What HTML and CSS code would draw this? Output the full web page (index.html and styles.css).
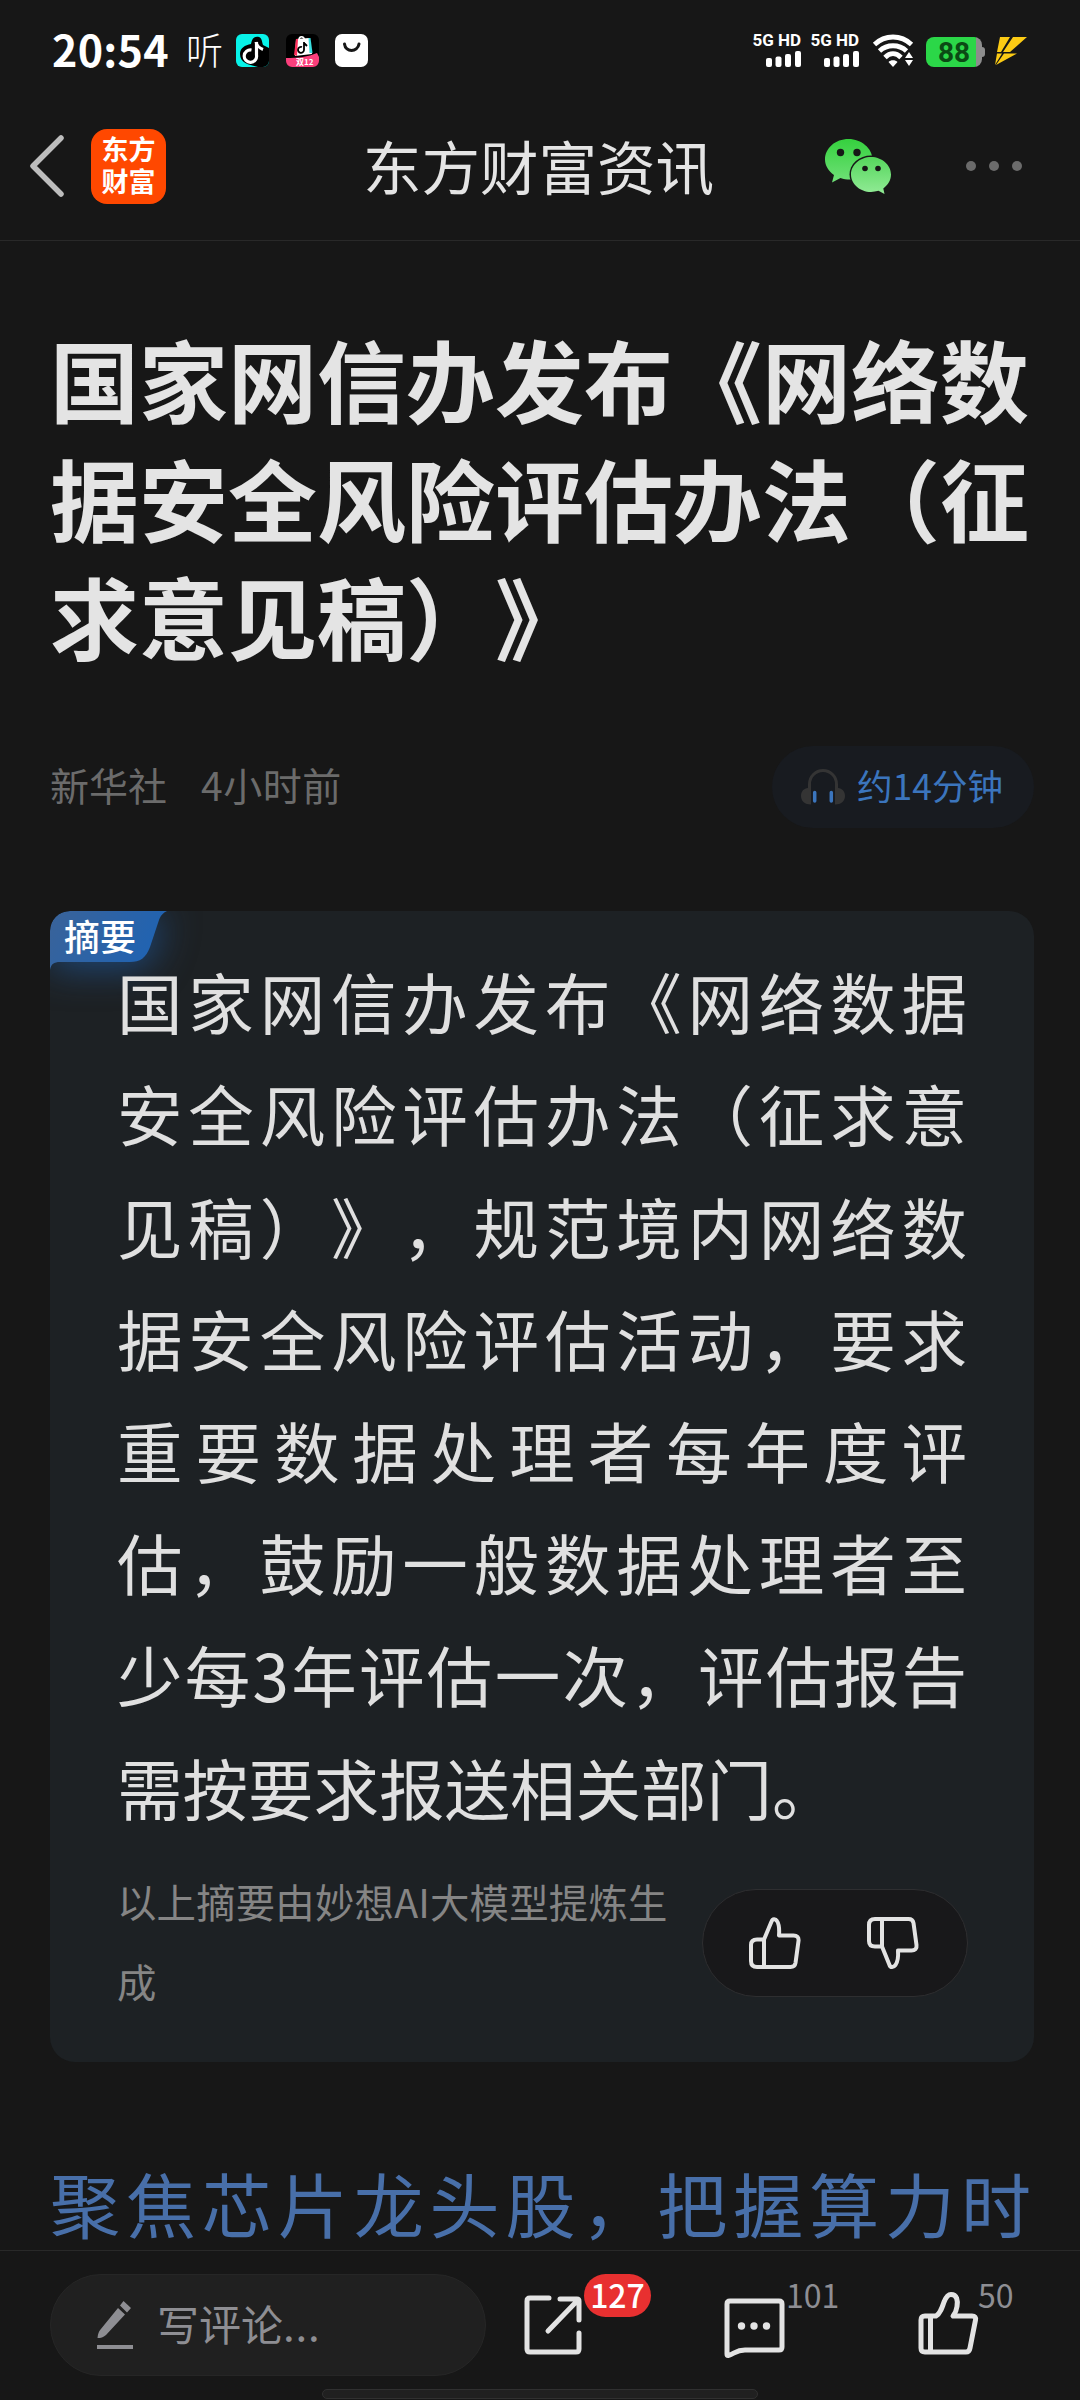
FILE: index.html
```html
<!DOCTYPE html>
<html lang="zh-CN">
<head>
  <meta charset="UTF-8">
  <meta name="viewport" content="width=device-width, initial-scale=1.0">
  <title>东方财富资讯</title>
  <link rel="stylesheet" href="styles.css">
</head>
<body>
  <div class="screen">
    <header class="status-bar">
      <span class="clock">20:54</span>
      <span class="listen">听</span>
      <svg class="app-icon" viewBox="0 0 33 33">
        <rect width="33" height="33" rx="6" fill="#08f3e9"/>
        <path d="M33 14V27a6 6 0 0 1-6 6H22C15 31 4 30 4 20c0-6 5-9 11-10 1-6 4-8 8-7 3 1 3 5 4 8z" fill="#000"/>
        <path d="M20.500 8V21a6.200 6.200 0 1 1-5-5" fill="none" stroke="#fff" stroke-width="3.200"/>
        <path d="M20 8c1 4 3 6 7 7.500" fill="none" stroke="#fff" stroke-width="3"/>
      </svg>
      <svg class="app-icon" viewBox="0 0 33 33">
        <rect width="33" height="33" rx="6" fill="#000"/>
        <path d="M10 5l13-1 3 16-17 2z" fill="#fff"/>
        <path d="M10 5l-2 16 3 1 1-17z" fill="#ff2e5b"/>
        <path d="M22.500 4h2l2 15h-3z" fill="#39dfe0"/>
        <path d="M13 6c0-4.500 5-4.500 5.500 0" fill="none" stroke="#fff" stroke-width="1.500"/>
        <path d="M18 8v8a3 3 0 1 1-2-3M18 9l3 3" fill="none" stroke="#000" stroke-width="1.800"/>
        <path d="M0 24c12 0 22-1 31-5l2 4v4a6 6 0 0 1-6 6H6a6 6 0 0 1-6-6z" fill="#fb3f7c"/>
        <text x="10" y="31" class="sale">双12</text>
      </svg>
      <svg class="app-icon" viewBox="0 0 33 33">
        <rect width="33" height="33" rx="7" fill="#fff"/>
        <path d="M9.500 10c1 8.500 13 8.500 14.500 0" fill="none" stroke="#161616" stroke-width="3" stroke-linecap="round"/>
      </svg>
      <div class="status-right">
        <div class="signal">
          <span>5G HD</span>
          <svg width="35" height="16" viewBox="0 0 35 16" fill="#fff"><rect y="7" width="6" height="9" rx="2"/><rect x="9.500" y="5.500" width="6" height="10.500" rx="2"/><rect x="19" y="3" width="6" height="13" rx="2"/><rect x="29" width="6" height="16" rx="2"/></svg>
        </div>
        <div class="signal">
          <span>5G HD</span>
          <svg width="35" height="16" viewBox="0 0 35 16" fill="#fff"><rect y="7" width="6" height="9" rx="2"/><rect x="9.500" y="5.500" width="6" height="10.500" rx="2"/><rect x="19" y="3" width="6" height="13" rx="2"/><rect x="29" width="6" height="16" rx="2"/></svg>
        </div>
        <svg class="wifi" viewBox="0 0 40 32">
          <g fill="none" stroke="#fff" stroke-width="4.800">
            <path d="M1.500 9.500C12-.5 28-.5 38.500 9.500"/>
            <path d="M6.500 16C14 9 26 9 33.500 16"/>
            <path d="M12 22.500C17 17.500 23 17.500 28 22.500"/>
          </g>
          <path d="M20 32l-4.500-5c2-2.500 7-2.500 9 0z" fill="#fff"/>
          <path d="M31 22l5-7 4 5v12h-9z" fill="#171717"/>
          <path d="M36 17l4 6h-8zM36 31l4-6h-8z" fill="#fff"/>
        </svg>
        <div class="battery"><span>88</span></div>
        <svg class="bolt" viewBox="0 0 32 28" fill="#fccb14">
          <path d="M5 0h10L6 15H2zM18 0h14L15 15H8zM2 16.500h5L0 28zM9 16.500h13L1 28z"/>
        </svg>
      </div>
    </header>

    <nav class="nav-bar">
      <svg class="back" viewBox="0 0 36 62"><path d="M32 3L4 31l28 28" fill="none" stroke="#bdbdbd" stroke-width="5.500" stroke-linecap="round" stroke-linejoin="round"/></svg>
      <div class="logo"><span>东方</span><span>财富</span></div>
      <h1 class="nav-title">东方财富资讯</h1>
      <svg class="wechat" viewBox="0 0 66 55">
        <defs>
          <linearGradient id="wx-back" x1="0" y1="0" x2="0" y2="1"><stop offset="0" stop-color="#35d13e"/><stop offset="1" stop-color="#70e078"/></linearGradient>
          <linearGradient id="wx-front" x1="0" y1="0" x2="0" y2="1"><stop offset="0" stop-color="#55d65c"/><stop offset="1" stop-color="#92eb96"/></linearGradient>
        </defs>
        <path d="M23.500 0C10.500 0 0 9 0 20.500c0 6 3.500 11.500 9 15.500l-2 7.500 8.500-4.500c3 1 6 1.500 9.500 1.500 12.500 0 22.500-9 22.500-20S36.500 0 23.500 0z" fill="url(#wx-back)"/>
        <ellipse cx="46" cy="35.500" rx="21.500" ry="19" fill="#171717"/>
        <path d="M46 18c-11 0-20 8-20 17.500S35 53 46 53c2.500 0 5-.5 7.500-1.200l6 3.200-1.200-5.500C63 46 66 41 66 35.500 66 26 57 18 46 18z" fill="url(#wx-front)"/>
        <g fill="#171717"><circle cx="15.500" cy="13.500" r="3.700"/><circle cx="32" cy="13.500" r="3.700"/><circle cx="40" cy="29.500" r="2.800"/><circle cx="53" cy="29.500" r="2.800"/></g>
      </svg>
      <div class="more"><i></i><i></i><i></i></div>
    </nav>

    <main class="article">
      <h2 class="headline">国家网信办发布《网络数据安全风险评估办法（征求意见稿）》</h2>

      <div class="meta">
        <span class="source">新华社</span>
        <span class="time">4小时前</span>
        <div class="listen-pill">
          <svg viewBox="0 0 44 36">
            <path d="M8.500 22V15a13.500 13.500 0 0 1 27 0v7" fill="none" stroke="#343434" stroke-width="3"/>
            <path d="M10 19v16.500C4 35.500 0 32 0 27s3-7.500 7-8zM34 19v16.500c6 0 10-3.500 10-8.500s-3-7.500-7-8z" fill="#343434"/>
            <path d="M13.700 23.500v8.500M30.300 23.500v8.500" stroke="#3b75bd" stroke-width="3.500" stroke-linecap="round"/>
          </svg>
          <span>约14分钟</span>
        </div>
      </div>

      <section class="summary">
        <div class="tag-glow">
          <svg viewBox="0 0 117 59">
            <defs><linearGradient id="tag-fill" x1="0" y1="0" x2="1" y2="0.300"><stop offset="0" stop-color="#3a6399"/><stop offset="1" stop-color="#2063b2"/></linearGradient></defs>
            <path d="M0 59V20A20 20 0 0 1 20 0H117c-4 2-6 4-8 9l-9 27c-4 11-10 15-20 15H10C4 51 1 53 0 59z" fill="url(#tag-fill)"/>
          </svg>
        </div>
        <span class="tag">摘要</span>
        <p class="summary-text">国家网信办发布《网络数据安全风险评估办法（征求意见稿）》，规范境内网络数据安全风险评估活动，要求重要数据处理者每年度评估，鼓励一般数据处理者至少每3年评估一次，评估报告需按要求报送相关部门。</p>
        <div class="summary-foot">
          <p class="note">以上摘要由妙想AI大模型提炼生成</p>
          <div class="vote">
            <svg viewBox="0 0 52 52"><path d="M15 22.500L22.500 4.500c1-3 4-3 5.500-.5 2 3 2.500 8 2 14.500h14.500c3.500 0 5.500 2 5 5.500l-3 22c-.5 3-2 4-5 4H8c-4 0-6-2-6-6V28c0-4 2-5.500 6-5.500zM15 22.500v27"/></svg>
            <svg viewBox="0 0 52 52"><path d="M15 29.500L22.500 48c1 3 4 2.500 6 0 2-3 3-8 2.500-14.500H44.500c3.500 0 5.500-2 5-5.500l-3-22c-.5-3-2-4-5-4H8c-4 0-6 2-6 6V24c0 4 2 5.500 6 5.500zM15 29.500v-27"/></svg>
          </div>
        </div>
      </section>

      <p class="promo">聚焦芯片龙头股，把握算力时</p>
    </main>

    <footer class="toolbar">
      <div class="comment-box">
        <svg viewBox="0 0 36 50" fill="#8e8e93"><path d="M21 8l7 6.500L9 35c-3 2.500-5 3-8.500 3 .5-4 1-6 3-8.500zM23 5.500L26.500 1 34 8l-4 4.500zM0 45h36v4H0z"/></svg>
        <span>写评论<span class="dots">...</span></span>
      </div>
      <div class="action share">
        <svg viewBox="0 0 60 60"><path d="M25 3H6C4 3 3 4 3 6v48c0 2 1 3 3 3h46c2 0 3-1 3-3V38M36 4h17c1.500 0 2 .5 2 2v19M53 6L24 36"/></svg>
        <span class="badge">127</span>
      </div>
      <div class="action comments">
        <svg viewBox="0 0 64 60"><path d="M6 3h49c2 0 3 1 3 3v43c0 2-1 3-3 3H21c-9 0-11 4-17 5.500-1 0-1-.5-1-1.500V6c0-2 1-3 3-3z"/><g fill="#e3e3e3" stroke="none"><circle cx="17.500" cy="28" r="3.700"/><circle cx="30" cy="28" r="3.700"/><circle cx="42.500" cy="28" r="3.700"/></g></svg>
        <span class="count">101</span>
      </div>
      <div class="action likes">
        <svg viewBox="0 0 64 63"><path d="M13 24h5c4-2 6-8 8-14 2-5 4-7.500 7-7.500 6 0 7 6 6 12-.5 4-2 7-4 9.500h19c3 0 4 1.500 3.500 4L52 56c-.5 3-2 4-4 4H7c-3 0-4-1-4-4V28c0-3 1-4 4-4zM12.500 24v36"/></svg>
        <span class="count">50</span>
      </div>
    </footer>
    <div class="home-indicator"></div>
  </div>
</body>
</html>
```

FILE: styles.css
```css
:root {
  --background: #171717;
  --foreground: #e4e4e4;
  --card: #1d2124;
  --muted: #6b6b6b;
  --line: #292929;
}

* {
  box-sizing: border-box;
}

body {
  margin: 0;
  background-color: var(--background);
  color: var(--foreground);
  font-family: "Noto Sans CJK SC", sans-serif;
  text-spacing-trim: space-all;
}

h1, h2, p {
  margin: 0;
  font-weight: 400;
}

svg {
  display: block;
  flex: none;
  overflow: visible;
}

.screen {
  position: relative;
  display: flex;
  flex-direction: column;
  width: 1080px;
  height: 2400px;
  overflow: hidden;
}

/* status bar */
.status-bar {
  display: flex;
  align-items: center;
  height: 101px;
  padding: 0 53px 0 52px;
  color: #fff;
}

.clock {
  width: 134px;
  padding-bottom: 5px;
  font-size: 43px;
  font-weight: 700;
  line-height: 50px;
  letter-spacing: 0.3px;
}

.listen {
  width: 50px;
  padding-bottom: 3px;
  font-size: 37px;
  font-weight: 300;
  line-height: 50px;
}

.app-icon {
  width: 33px;
  height: 33px;
  margin-right: 16.500px;
}

.sale {
  font-size: 8px;
  font-weight: 700;
  fill: #fff;
}

.status-right {
  display: flex;
  align-items: center;
  margin-left: auto;
}

.signal {
  display: flex;
  flex-direction: column;
  align-items: flex-end;
  justify-content: space-between;
  width: 48px;
  height: 33px;
  margin-right: 10px;
}

.signal span {
  font-family: Roboto, sans-serif;
  font-size: 17px;
  font-weight: 700;
  line-height: 12px;
  white-space: nowrap;
}

.wifi {
  width: 40px;
  height: 32px;
  margin: 0 13px 0 4px;
}

.battery {
  position: relative;
  width: 56px;
  height: 30px;
  margin: 2px 13px 0 0;
  border-radius: 8px;
  background: linear-gradient(90deg, #2bd748 50px, #8d8d8d 50px);
  color: #0b4a14;
  font-family: Roboto, sans-serif;
  font-size: 28px;
  font-weight: 700;
  line-height: 31px;
  text-align: center;
}

.battery::after {
  content: "";
  position: absolute;
  top: 10px;
  right: -3px;
  width: 3px;
  height: 10px;
  border-radius: 0 3px 3px 0;
  background-color: #8d8d8d;
}

.bolt {
  width: 32px;
  height: 28px;
}

/* navigation */
.nav-bar {
  display: flex;
  align-items: center;
  height: 140px;
  padding: 0 58px 9px 29px;
  border-bottom: 1px solid var(--line);
}

.back {
  width: 36px;
  height: 62px;
}

.logo {
  display: flex;
  flex-direction: column;
  align-items: center;
  width: 75px;
  height: 75px;
  margin-left: 26px;
  padding-top: 4px;
  border-radius: 16px;
  background-color: #ff4800;
  color: #fff;
  font-size: 27px;
  font-weight: 700;
  line-height: 32px;
}

.nav-title {
  margin-left: 197px;
  padding-bottom: 3px;
  font-size: 58.500px;
  line-height: 80px;
}

.wechat {
  width: 66px;
  height: 55px;
  margin-left: 111px;
}

.more {
  display: flex;
  gap: 13px;
  margin-left: auto;
}

.more i {
  width: 10px;
  height: 10px;
  border-radius: 50%;
  background-color: #6b6b6b;
}

/* article */
.article {
  flex: 1;
  min-height: 0;
  padding: 78px 46px 0 50px;
}

.headline {
  width: 984px;
  font-size: 89px;
  font-weight: 700;
  line-height: 118.700px;
}

.meta {
  display: flex;
  align-items: center;
  height: 82px;
  margin-top: 71px;
  color: var(--muted);
  font-size: 39px;
}

.meta span {
  padding-bottom: 6px;
}

.time {
  margin-left: 34px;
  letter-spacing: 0.5px;
}

.listen-pill {
  display: flex;
  align-items: center;
  gap: 12px;
  width: 262px;
  height: 82px;
  margin-left: auto;
  padding-left: 29px;
  border-radius: 41px;
  background-color: #181b20;
  color: #3b75bd;
  font-size: 35.500px;
}

.listen-pill svg {
  width: 44px;
  height: 36px;
}

.summary {
  position: relative;
  height: 1151px;
  margin-top: 83px;
  padding: 34px 67px 0 67px;
  border-radius: 25px;
  background-color: var(--card);
}

.tag-glow {
  position: absolute;
  top: 0;
  left: 0;
  width: 220px;
  height: 140px;
  border-top-left-radius: 20px;
  overflow: hidden;
}

.tag-glow svg {
  width: 117px;
  height: 59px;
  filter: drop-shadow(2px 6px 18px rgba(32, 99, 178, 0.600));
}

.tag {
  position: absolute;
  top: 0;
  left: 14px;
  color: #fff;
  font-size: 36px;
  font-weight: 500;
  line-height: 48px;
}

.summary-text {
  position: relative;
  font-size: 65.500px;
  line-height: 112.200px;
  text-align: justify;
  color: #e0e0e0;
}

.summary-foot {
  display: flex;
  justify-content: space-between;
  margin-top: 18px;
}

.note {
  width: 565px;
  color: #858585;
  font-size: 39.400px;
  line-height: 80px;
  letter-spacing: 0.200px;
}

.vote {
  display: flex;
  align-items: center;
  justify-content: space-between;
  width: 266px;
  height: 108px;
  margin: 28px -1px 0 0;
  padding: 0 48px 0 46px;
  border: 1px solid #2e2e30;
  border-radius: 54px;
  background-color: #18181a;
}

.vote svg {
  width: 52px;
  height: 52px;
  fill: none;
  stroke: #e3e3e3;
  stroke-width: 4;
  stroke-linejoin: round;
}

.promo {
  width: 981px;
  margin-top: 86px;
  color: #486fa9;
  font-size: 70px;
  line-height: 110px;
  text-align: justify;
  text-align-last: justify;
  white-space: nowrap;
}

/* bottom toolbar */
.toolbar {
  display: flex;
  align-items: flex-start;
  height: 150px;
  padding: 23px 50px 0;
  border-top: 1px solid var(--line);
  background-color: var(--background);
}

.comment-box {
  display: flex;
  align-items: center;
  gap: 24px;
  width: 436px;
  height: 102px;
  padding-left: 46px;
  border: 1px solid #262626;
  border-radius: 51px;
  background-color: #202020;
  color: #8e8e93;
  font-size: 42px;
}

.comment-box > span {
  padding-bottom: 6px;
}

.dots {
  letter-spacing: 0.800px;
}

.comment-box svg {
  width: 36px;
  height: 50px;
}

.action {
  position: relative;
}

.action svg {
  fill: none;
  stroke: #e3e3e3;
  stroke-width: 5;
  stroke-linecap: round;
  stroke-linejoin: round;
}

.share {
  margin: 21px 0 0 38px;
}

.share svg {
  width: 60px;
  height: 60px;
}

.comments {
  margin: 24px 0 0 140px;
}

.comments svg {
  width: 64px;
  height: 60px;
}

.likes {
  margin: 18px 0 0 130px;
}

.likes svg {
  width: 64px;
  height: 63px;
}

.badge,
.count {
  position: absolute;
  font-size: 32px;
  line-height: 43px;
}

.badge {
  top: -21px;
  left: 60px;
  width: 67px;
  height: 43px;
  border-radius: 22px;
  background-color: #e83030;
  color: #fff;
  font-weight: 500;
  line-height: 40px;
  text-align: center;
}

.count {
  top: -25px;
  left: 62px;
  color: #8e8e93;
}

.likes .count {
  top: -19px;
  left: 60px;
}

.home-indicator {
  position: absolute;
  bottom: 1px;
  left: 322px;
  width: 436px;
  height: 10px;
  border: 1px solid #303030;
  border-radius: 5px;
  background-color: #202020;
}
```
